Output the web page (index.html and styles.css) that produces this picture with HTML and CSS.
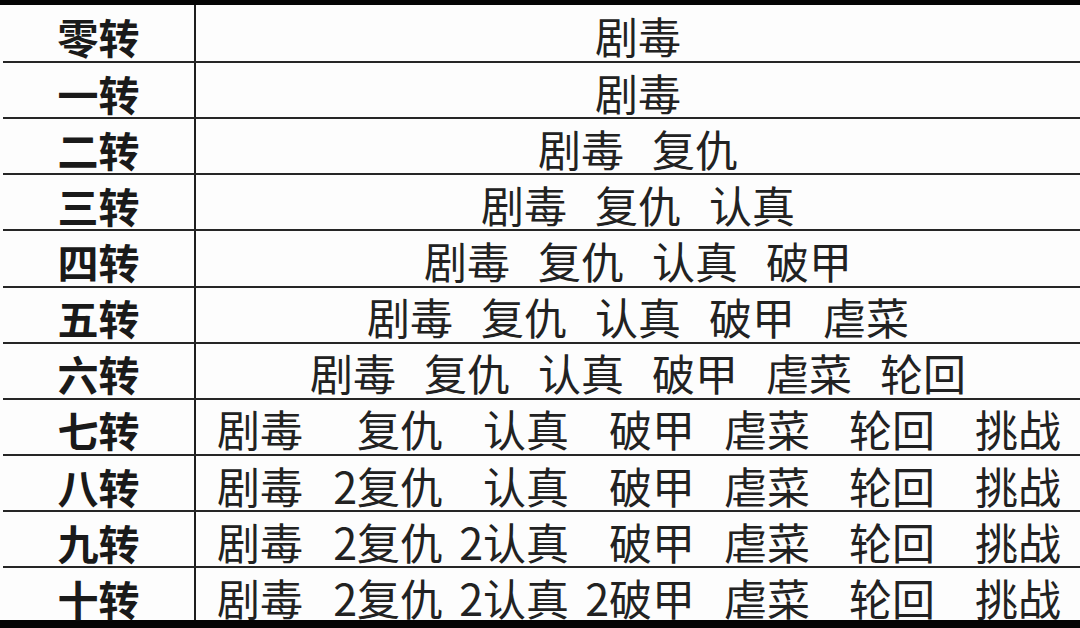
FILE: index.html
```html
<!DOCTYPE html>
<html lang="zh-CN">
<head>
<meta charset="utf-8">
<title>转职表</title>
<link rel="stylesheet" href="styles.css">
</head>
<body>
<div class="sheet">
  <div class="row first">
    <div class="label">零转</div>
    <div class="content center"><span>剧毒</span></div>
  </div>
  <div class="row">
    <div class="label">一转</div>
    <div class="content center"><span>剧毒</span></div>
  </div>
  <div class="row">
    <div class="label">二转</div>
    <div class="content center"><span>剧毒</span><span>复仇</span></div>
  </div>
  <div class="row">
    <div class="label">三转</div>
    <div class="content center"><span>剧毒</span><span>复仇</span><span>认真</span></div>
  </div>
  <div class="row">
    <div class="label">四转</div>
    <div class="content center"><span>剧毒</span><span>复仇</span><span>认真</span><span>破甲</span></div>
  </div>
  <div class="row">
    <div class="label">五转</div>
    <div class="content center"><span>剧毒</span><span>复仇</span><span>认真</span><span>破甲</span><span>虐菜</span></div>
  </div>
  <div class="row">
    <div class="label">六转</div>
    <div class="content center"><span>剧毒</span><span>复仇</span><span>认真</span><span>破甲</span><span>虐菜</span><span>轮回</span></div>
  </div>
  <div class="row">
    <div class="label">七转</div>
    <div class="content cols"><span>剧毒</span><span>复仇</span><span>认真</span><span>破甲</span><span>虐菜</span><span>轮回</span><span>挑战</span></div>
  </div>
  <div class="row">
    <div class="label">八转</div>
    <div class="content cols"><span>剧毒</span><span>2复仇</span><span>认真</span><span>破甲</span><span>虐菜</span><span>轮回</span><span>挑战</span></div>
  </div>
  <div class="row">
    <div class="label">九转</div>
    <div class="content cols"><span>剧毒</span><span>2复仇</span><span>2认真</span><span>破甲</span><span>虐菜</span><span>轮回</span><span>挑战</span></div>
  </div>
  <div class="row last">
    <div class="label">十转</div>
    <div class="content cols"><span>剧毒</span><span>2复仇</span><span>2认真</span><span>2破甲</span><span>虐菜</span><span>轮回</span><span>挑战</span></div>
  </div>
</div>
</body>
</html>
```

FILE: styles.css
```css
html, body {
  margin: 0;
  padding: 0;
  background: #050505;
}
body {
  width: 1080px;
  height: 628px;
  overflow: hidden;
  font-family: "Noto Sans CJK SC", "Noto Sans", sans-serif;
}
.sheet {
  margin-top: 5px;
  height: 615px;
  background: #fdfdfd;
  padding-left: 3px;
  box-sizing: border-box;
  display: grid;
  grid-template-rows: 58px repeat(9, 56.15px) 1fr;
}
.row {
  display: grid;
  grid-template-columns: 191px 2px 1fr;
  border-bottom: 2px solid #262626;
  box-sizing: border-box;
}
.row.last {
  border-bottom: none;
}
.label {
  grid-column: 1;
  display: flex;
  align-items: center;
  justify-content: center;
  font-weight: 700;
  font-size: 41px;
  line-height: 1;
  color: #1a1a1a;
  padding-top: 6px;
}
.row::before {
  content: "";
  grid-column: 2;
  grid-row: 1;
  background: #1e1e1e;
}
.content {
  grid-column: 3;
  font-size: 43px;
  line-height: 1;
  color: #222222;
  padding-top: 4px;
}
.row.last .label {
  padding-top: 9px;
}
.row.last .content {
  padding-top: 7px;
}
.content.center {
  display: flex;
  justify-content: center;
  align-items: center;
  gap: 28px;
}
.content.cols {
  display: grid;
  grid-template-columns: 107px 140px 126px 126px 115px 125px 126px;
  align-items: center;
  justify-items: end;
}
```
